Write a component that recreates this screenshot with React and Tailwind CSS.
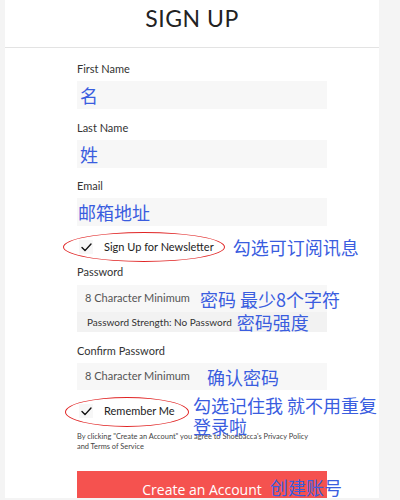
import React from "react";

const CN = { fontFamily: '"Noto Sans CJK SC", "Noto Sans", sans-serif' };
const SANS = { fontFamily: 'Lato, "Open Sans", "Liberation Sans", sans-serif' };

function Check() {
  return (
    <span className="flex h-[14px] w-[14px] shrink-0 items-center justify-center bg-[#f7f7f7]">
      <svg width="11" height="9" viewBox="0 0 11 9" fill="none">
        <path d="M1 4.6 L4 7.6 L10 1" stroke="#111" strokeWidth="1.4" strokeLinecap="round" strokeLinejoin="round" />
      </svg>
    </span>
  );
}

function Label({ children, className = "" }) {
  return <p className={`h-[14px] text-[11px] leading-[14px] text-[#333] ${className}`}>{children}</p>;
}

// blue handwritten-style notes added on top of the screenshot
function Note({ children, className = "" }) {
  return (
    <span style={CN} className={`shrink-0 whitespace-nowrap text-[18px] leading-[20px] text-[#3a5ddf] ${className}`}>
      {children}
    </span>
  );
}

export default function App() {
  return (
    <div style={SANS} className="flex h-[500px] w-[400px] overflow-hidden bg-[#f4f4f4]">
      <div className="ml-[5px] h-[498px] w-[374px] overflow-hidden bg-white">
        <div className="flex h-[48px] items-start justify-center border-b border-[#e3e3e3] pt-[4px]">
          <h1 className="text-[23px] font-normal leading-[28px] tracking-[0.5px] text-[#222]">SIGN UP</h1>
        </div>

        <div className="box-content w-[250px] pl-[72px] pt-[14px]">
          <Label>First Name</Label>
          <div style={CN} className="mt-[5px] flex h-[28px] items-center bg-[#f7f7f7] pl-[3px] text-[18px] text-[#3a5ddf]">名</div>

          <Label className="mt-[12px]">Last Name</Label>
          <div style={CN} className="mt-[5px] flex h-[28px] items-center bg-[#f7f7f7] pl-[3px] text-[18px] text-[#3a5ddf]">姓</div>

          <Label className="mt-[11px]">Email</Label>
          <div style={CN} className="mt-[5px] flex h-[28px] items-center bg-[#f7f7f7] pl-[1px] text-[18px] text-[#3a5ddf]">邮箱地址</div>

          <div className="relative mt-[10px] flex h-[22px] items-center pl-[2px]">
            <span className="absolute left-[-14px] top-[-4px] h-[30px] w-[162px] rounded-[50%] border-[1.5px] border-[#e02424]" />
            <Check />
            <span className="ml-[11px] shrink-0 whitespace-nowrap text-[11px] text-[#222]">Sign Up for Newsletter</span>
            <Note className="ml-[19px]">勾选可订阅讯息</Note>
          </div>

          <Label className="mt-[7px]">Password</Label>
          <div className="mt-[6px] flex flex-col bg-[#f7f7f7]">
            <div className="flex h-[27px] items-center pl-[8px] text-[11px] text-[#555]">
              <span className="shrink-0 whitespace-nowrap">8 Character Minimum</span>
              <Note className="ml-[10px]">密码 最少8个字符</Note>
            </div>
            <div className="flex h-[20px] items-center bg-[#f2f2f2] pl-[10px] text-[10px] text-[#333]">
              <span className="shrink-0 whitespace-nowrap">Password Strength: No Password</span>
              <Note className="ml-[5px]">密码强度</Note>
            </div>
          </div>

          <Label className="mt-[12px]">Confirm Password</Label>
          <div className="mt-[5px] flex h-[27px] items-center bg-[#f7f7f7] pl-[8px] text-[11px] text-[#555]">
            <span className="shrink-0 whitespace-nowrap">8 Character Minimum</span>
            <Note className="ml-[17px]">确认密码</Note>
          </div>

          <div className="relative mt-[10px] flex h-[22px] items-center pl-[2px]">
            <span className="absolute left-[-12px] top-[-3px] h-[30px] w-[124px] rounded-[50%] border-[1.5px] border-[#e02424]" />
            <Check />
            <span className="ml-[11px] shrink-0 whitespace-nowrap text-[11px] text-[#222]">Remember Me</span>
            <Note className="absolute left-[116px] top-[-5px] leading-[21px]">
              勾选记住我 就不用重复
              <br />
              登录啦
            </Note>
          </div>

          <p className="mt-[10px] text-[7.4px] leading-[10px] text-[#444]">
            By clicking "Create an Account" you agree to Shoebacca's Privacy Policy
            <br />
            and Terms of Service
          </p>

          <div className="relative mt-[19px] flex h-[36px] items-center justify-center bg-[#f5524f]">
            <span style={{ fontFamily: '"Open Sans", sans-serif' }} className="text-[14px] text-white">Create an Account</span>
            <Note className="absolute left-[193px] top-[6px]">创建账号</Note>
          </div>
        </div>
      </div>
    </div>
  );
}
